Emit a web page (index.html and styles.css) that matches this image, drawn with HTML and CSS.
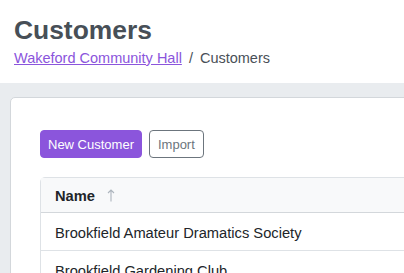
FILE: index.html
```html
<!DOCTYPE html>
<html lang="en">
<head>
  <meta charset="UTF-8">
  <meta name="viewport" content="width=device-width, initial-scale=1.0">
  <title>Customers</title>
  <link rel="stylesheet" href="styles.css">
</head>
<body>
  <div class="page-header">
    <h1 class="page-title">Customers</h1>
    <nav class="breadcrumb">
      <a href="#">Wakeford Community Hall</a>
      <span class="sep">/</span>
      <span class="current">Customers</span>
    </nav>
  </div>

  <div class="content">
    <div class="card">
      <div class="actions">
        <button class="btn btn-primary">New Customer</button>
        <button class="btn btn-outline">Import</button>
      </div>

      <table class="table">
        <thead>
          <tr>
            <th>
              Name
              <svg class="sort" width="8" height="13" viewBox="0 0 8 13">
                <path d="M4 12.5V1M1 4l3-3 3 3" fill="none" stroke="currentColor" stroke-width="1.1"/>
              </svg>
            </th>
          </tr>
        </thead>
        <tbody>
          <tr><td>Brookfield Amateur Dramatics Society</td></tr>
          <tr><td>Brookfield Gardening Club</td></tr>
        </tbody>
      </table>
    </div>
  </div>
</body>
</html>
```

FILE: styles.css
```css
* {
  margin: 0;
  padding: 0;
  box-sizing: border-box;
}

body {
  font-family: 'Liberation Sans', Arial, sans-serif;
  background: #fff;
  color: #212529;
  width: 404px;
  height: 273px;
  overflow: hidden;
}

.page-header {
  padding: 14px 14px 0;
  height: 83px;
}

.page-title {
  font-size: 26.4px;
  font-weight: 700;
  color: #474f57;
  line-height: 32px;
}

.breadcrumb {
  margin-top: 2px;
  font-size: 14.5px;
  line-height: 20px;
  color: #495057;
  display: flex;
  gap: 7px;
}

.breadcrumb a {
  color: #8b55dc;
  text-decoration: underline;
}

.content {
  background: #e9ecef;
  padding: 14px 0 0 10px;
  height: 190px;
  overflow: hidden;
}

.card {
  background: #fff;
  border: 1px solid #d3d7db;
  border-radius: 5px;
  width: 600px;
  height: 300px;
  padding: 32px 29px;
}

.actions {
  display: flex;
  gap: 7px;
  margin-bottom: 19px;
}

.btn {
  font-family: 'Liberation Sans', Arial, sans-serif;
  font-size: 13px;
  height: 28px;
  padding: 0 7px;
  border-radius: 4px;
  cursor: pointer;
}

.btn-primary {
  background: #8b55dc;
  border: 1px solid #8b55dc;
  color: #fff;
}

.btn-outline {
  background: #fff;
  border: 1px solid #6c757d;
  color: #6c757d;
  padding: 0 8px;
}

.table {
  width: 100%;
  border-collapse: separate;
  border-spacing: 0;
  border: 1px solid #dee2e6;
  border-radius: 5px;
  font-size: 14.7px;
  text-align: left;
}

.table th {
  background: #f8f9fa;
  font-weight: 700;
  height: 35px;
  padding: 1px 14px 0;
  border-bottom: 1px solid #d3d7db;
  white-space: nowrap;
}

.table td {
  height: 38px;
  padding: 2px 14px 0;
  border-bottom: 1px solid #dee2e6;
}

.sort {
  color: #adb5bd;
  margin-left: 8px;
  vertical-align: -1px;
}
```
